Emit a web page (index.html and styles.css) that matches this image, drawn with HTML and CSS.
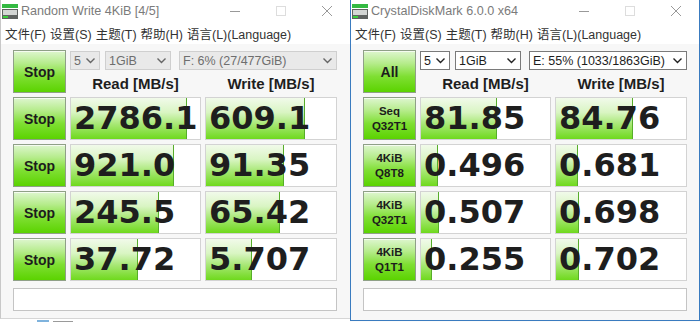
FILE: index.html
```html
<!DOCTYPE html>
<html lang="zh-CN">
<head>
    <meta charset="UTF-8">
    <title>CrystalDiskMark</title>
    <link rel="stylesheet" href="styles.css">
</head>
<body>
<div class="col-left">
    <div class="win win-left">
        <div class="titlebar">
            <svg class="app-icon" width="16" height="16" viewBox="0 0 16 16">
                <rect x="0" y="1" width="16" height="4" fill="#33b941"/>
                <rect x="0" y="6" width="16" height="10" fill="#5f6361"/>
                <rect x="1" y="7" width="14" height="5" fill="#d3d6d4"/>
                <rect x="1" y="13" width="5" height="2" fill="#3ccf3c"/>
            </svg>
            <span class="title">Random Write 4KiB [4/5]</span>
            <div class="controls">
                <span class="ctl"><svg width="10" height="10" viewBox="0 0 10 10"><path d="M0 5.5h10" stroke="#999" stroke-width="1"/></svg></span>
                <span class="ctl"><svg width="10" height="10" viewBox="0 0 10 10"><rect x="0.5" y="0.5" width="9" height="9" fill="none" stroke="#ddd" stroke-width="1"/></svg></span>
                <span class="ctl"><svg width="10" height="10" viewBox="0 0 10 10"><path d="M0 0L10 10M10 0L0 10" stroke="#999" stroke-width="1"/></svg></span>
            </div>
        </div>
        <div class="menu">
            <span>文件(F)</span><span>设置(S)</span><span>主题(T)</span><span>帮助(H)</span><span>语言(L)(Language)</span>
        </div>
        <div class="panel">
            <div class="btn btn-top">Stop</div>
            <div class="selects">
                <div class="sel sel-count off">5<svg width="9" height="6" viewBox="0 0 9 6"><path d="M0.5 0.5L4.5 4.5L8.5 0.5" fill="none" stroke="#666" stroke-width="1.4"/></svg></div>
                <div class="sel sel-size off">1GiB<svg width="9" height="6" viewBox="0 0 9 6"><path d="M0.5 0.5L4.5 4.5L8.5 0.5" fill="none" stroke="#666" stroke-width="1.4"/></svg></div>
                <div class="sel sel-drive off">F: 6% (27/477GiB)<svg width="9" height="6" viewBox="0 0 9 6"><path d="M0.5 0.5L4.5 4.5L8.5 0.5" fill="none" stroke="#666" stroke-width="1.4"/></svg></div>
            </div>
            <div class="head">Read [MB/s]</div>
            <div class="head">Write [MB/s]</div>

            <div class="btn">Stop</div>
            <div class="cell"><div class="bar" style="width:116px"></div><span class="num">2786.1</span></div>
            <div class="cell"><div class="bar" style="width:99px"></div><span class="num">609.1</span></div>

            <div class="btn">Stop</div>
            <div class="cell"><div class="bar" style="width:103px"></div><span class="num">921.0</span></div>
            <div class="cell"><div class="bar" style="width:78px"></div><span class="num">91.35</span></div>

            <div class="btn">Stop</div>
            <div class="cell"><div class="bar" style="width:88px"></div><span class="num">245.5</span></div>
            <div class="cell"><div class="bar" style="width:74px"></div><span class="num">65.42</span></div>

            <div class="btn">Stop</div>
            <div class="cell"><div class="bar" style="width:67px"></div><span class="num">37.72</span></div>
            <div class="cell"><div class="bar" style="width:46px"></div><span class="num">5.707</span></div>

            <div class="status"></div>
        </div>
    </div>
    <div class="desk">
        <span class="desk-icon"></span><span class="desk-text"></span>
    </div>
</div>

<div class="win win-right">
    <div class="titlebar">
        <svg class="app-icon" width="16" height="16" viewBox="0 0 16 16">
            <rect x="0" y="1" width="16" height="4" fill="#33b941"/>
            <rect x="0" y="6" width="16" height="10" fill="#5f6361"/>
            <rect x="1" y="7" width="14" height="5" fill="#d3d6d4"/>
            <rect x="1" y="13" width="5" height="2" fill="#3ccf3c"/>
        </svg>
        <span class="title">CrystalDiskMark 6.0.0 x64</span>
        <div class="controls">
            <span class="ctl"><svg width="10" height="10" viewBox="0 0 10 10"><path d="M0 5.5h10" stroke="#999" stroke-width="1"/></svg></span>
            <span class="ctl"><svg width="10" height="10" viewBox="0 0 10 10"><rect x="0.5" y="0.5" width="9" height="9" fill="none" stroke="#ddd" stroke-width="1"/></svg></span>
            <span class="ctl"><svg width="10" height="10" viewBox="0 0 10 10"><path d="M0 0L10 10M10 0L0 10" stroke="#999" stroke-width="1"/></svg></span>
        </div>
    </div>
    <div class="menu">
        <span>文件(F)</span><span>设置(S)</span><span>主题(T)</span><span>帮助(H)</span><span>语言(L)(Language)</span>
    </div>
    <div class="panel">
        <div class="btn btn-top">All</div>
        <div class="selects">
            <div class="sel sel-count">5<svg width="9" height="6" viewBox="0 0 9 6"><path d="M0.5 0.5L4.5 4.5L8.5 0.5" fill="none" stroke="#222" stroke-width="1.4"/></svg></div>
            <div class="sel sel-size">1GiB<svg width="9" height="6" viewBox="0 0 9 6"><path d="M0.5 0.5L4.5 4.5L8.5 0.5" fill="none" stroke="#222" stroke-width="1.4"/></svg></div>
            <div class="sel sel-drive">E: 55% (1033/1863GiB)<svg width="9" height="6" viewBox="0 0 9 6"><path d="M0.5 0.5L4.5 4.5L8.5 0.5" fill="none" stroke="#222" stroke-width="1.4"/></svg></div>
        </div>
        <div class="head">Read [MB/s]</div>
        <div class="head">Write [MB/s]</div>

        <div class="btn btn-small">Seq<br>Q32T1</div>
        <div class="cell"><div class="bar" style="width:76px"></div><span class="num">81.85</span></div>
        <div class="cell"><div class="bar" style="width:77px"></div><span class="num">84.76</span></div>

        <div class="btn btn-small">4KiB<br>Q8T8</div>
        <div class="cell"><div class="bar" style="width:17px"></div><span class="num">0.496</span></div>
        <div class="cell"><div class="bar" style="width:22px"></div><span class="num">0.681</span></div>

        <div class="btn btn-small">4KiB<br>Q32T1</div>
        <div class="cell"><div class="bar" style="width:18px"></div><span class="num">0.507</span></div>
        <div class="cell"><div class="bar" style="width:23px"></div><span class="num">0.698</span></div>

        <div class="btn btn-small">4KiB<br>Q1T1</div>
        <div class="cell"><div class="bar" style="width:11px"></div><span class="num">0.255</span></div>
        <div class="cell"><div class="bar" style="width:23px"></div><span class="num">0.702</span></div>

        <div class="status"></div>
    </div>
</div>
</body>
</html>
```

FILE: styles.css
```css
body {
    margin: 0;
    width: 700px;
    height: 322px;
    overflow: hidden;
    display: flex;
    background-color: #fbfbfb;
    font-family: "Liberation Sans", "Noto Sans CJK SC", sans-serif;
    color: #222;
}

.col-left {
    width: 350px;
    display: flex;
    flex-direction: column;
}

.win {
    width: 350px;
    box-sizing: border-box;
    background-color: #f7f7f7;
}

.win-left {
    height: 319px;
    border-left: 1px solid #c8c8c8;
    border-bottom: 1px solid #d6d6d6;
}

.win-right {
    height: 321px;
    border: 1px solid #3a7bbf;
    border-top: none;
}

/* title bar */
.titlebar {
    height: 22px;
    display: flex;
    align-items: center;
    background-color: #fff;
}
.app-icon {
    margin-left: 1px;
    flex: none;
}
.title {
    margin-left: 3px;
    font-size: 12.6px;
    color: #7b7b7b;
}
.controls {
    margin-left: auto;
    display: flex;
    height: 22px;
}
.ctl {
    width: 46px;
    display: flex;
    align-items: center;
    justify-content: center;
}

/* menu */
.menu {
    height: 22px;
    display: flex;
    align-items: center;
    padding-left: 4px;
    gap: 4px;
    font-size: 12.5px;
    background-color: #fff;
    color: #333;
}

/* main grid */
.panel {
    display: grid;
    grid-template-columns: 53px 131px 132px;
    grid-template-rows: 20px 19px repeat(4, 43px) 26px;
    column-gap: 4px;
    row-gap: 4px;
    padding: 6px 0 0 12px;
}

.btn {
    box-sizing: border-box;
    border: 1px solid #8fa087;
    background: linear-gradient(#def6cf 0%, #b6ec8c 30%, #7fdf33 62%, #5bd300 100%);
    box-shadow: inset 0 1px 0 rgba(255, 255, 255, 0.7);
    display: flex;
    align-items: center;
    justify-content: center;
    text-align: center;
    font-weight: bold;
    font-size: 14px;
    color: #1c1c1c;
}
.btn-top {
    grid-row: span 2;
}
.btn-small {
    font-size: 11.5px;
    line-height: 15px;
}

.selects {
    grid-column: 2 / 4;
    display: flex;
    padding-top: 1px;
}
.sel {
    box-sizing: border-box;
    height: 19px;
    border: 1px solid #7a7a7a;
    background-color: #fff;
    display: flex;
    align-items: center;
    justify-content: space-between;
    padding: 0 4px 0 3px;
    font-size: 12.5px;
    color: #1e1e1e;
}
.sel.off {
    border-color: #cfcfcf;
    background-color: #e9e9e9;
    color: #6e6e6e;
}
.sel-count {
    width: 30px;
}
.sel-size {
    width: 66px;
    margin-left: 5px;
}
.sel-drive {
    width: 158px;
    margin-left: 8px;
}

.head {
    text-align: center;
    font-weight: bold;
    font-size: 15px;
    line-height: 19px;
    color: #1e1e1e;
}

.cell {
    position: relative;
    box-sizing: border-box;
    border: 1px solid #d3d3d3;
    background-color: #fff;
    overflow: hidden;
}
.bar {
    position: absolute;
    left: 0;
    top: 0;
    bottom: 0;
    box-sizing: border-box;
    border-right: 1px solid #57ad2b;
    background: linear-gradient(#f1faea 0%, #d9f5c3 35%, #a5e771 65%, #6fd91d 100%);
}
.num {
    position: relative;
    display: block;
    padding-left: 3px;
    font-family: "DejaVu Sans", sans-serif;
    font-weight: bold;
    font-size: 32px;
    line-height: 41px;
    color: #1e1e1e;
}

.status {
    grid-column: 1 / -1;
    margin-top: 3px;
    box-sizing: border-box;
    border: 1px solid #c4c4c4;
    background-color: #fff;
}

/* bit of desktop under the left window */
.desk {
    flex: 1;
    display: flex;
    align-items: flex-end;
    gap: 4px;
    padding-left: 37px;
    background-color: #fff;
}
.desk-icon {
    width: 12px;
    height: 2px;
    background-color: #7fb3dd;
}
.desk-text {
    width: 20px;
    height: 1px;
    background-color: #9a9a9a;
}
```
